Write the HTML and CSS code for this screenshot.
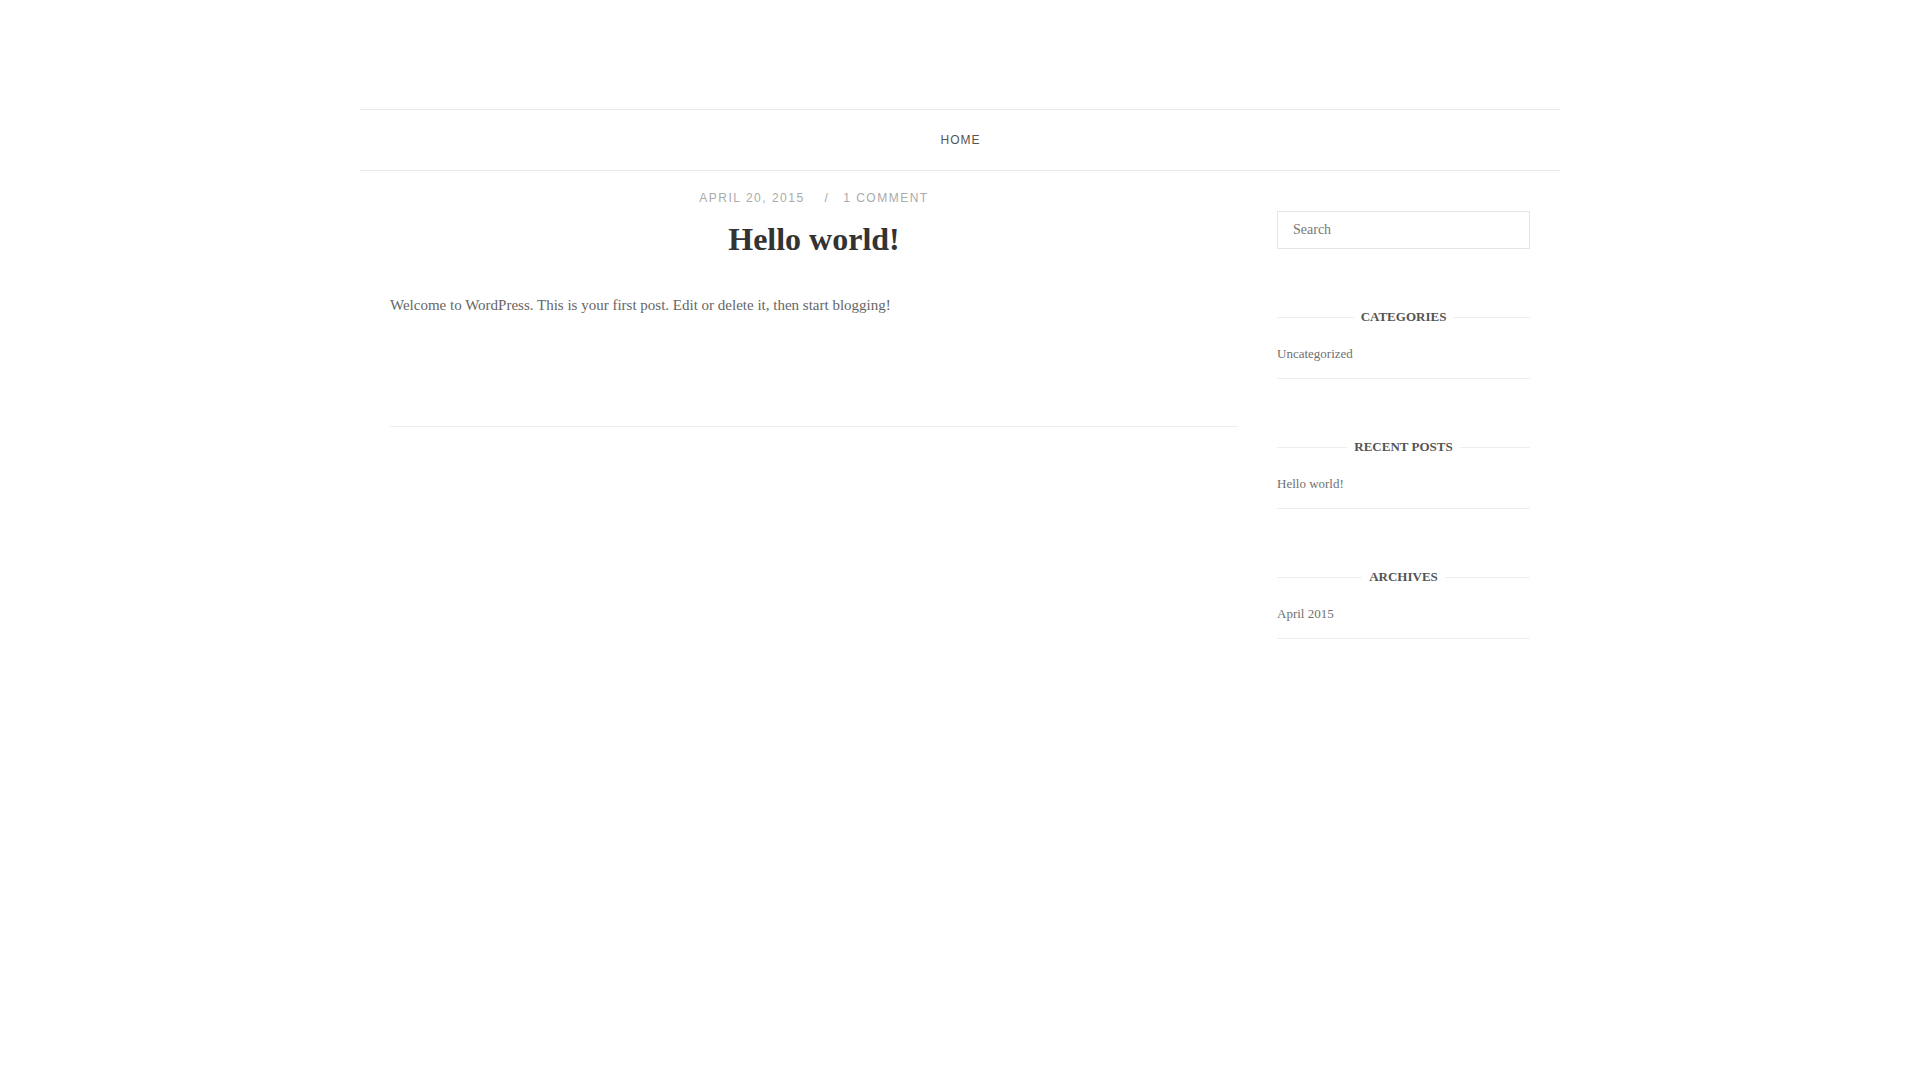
FILE: index.html
```html
<!DOCTYPE html>
<html lang="en">
<head>
<meta charset="utf-8">
<title>Hello world!</title>
<link rel="stylesheet" href="styles.css">
</head>
<body>
<div class="page">
  <header class="site-header"></header>
  <nav class="main-nav">
    <a class="nav-link" href="#">HOME</a>
  </nav>
  <div class="content-wrap">
    <main class="main">
      <article class="post">
        <div class="post-meta">
          <span class="meta-item">APRIL 20, 2015</span>
          <span class="meta-sep">/</span>
          <span class="meta-item">1 COMMENT</span>
        </div>
        <h1 class="post-title">Hello world!</h1>
        <div class="post-body">
          <p>Welcome to WordPress. This is your first post. Edit or delete it, then start blogging!</p>
        </div>
      </article>
    </main>
    <aside class="sidebar">
      <div class="search-widget">
        <input class="search-input" type="text" placeholder="Search">
      </div>
      <section class="widget">
        <h3 class="widget-title"><span>CATEGORIES</span></h3>
        <ul class="widget-list"><li><a href="#">Uncategorized</a></li></ul>
      </section>
      <section class="widget">
        <h3 class="widget-title"><span>RECENT POSTS</span></h3>
        <ul class="widget-list"><li><a href="#">Hello world!</a></li></ul>
      </section>
      <section class="widget">
        <h3 class="widget-title"><span>ARCHIVES</span></h3>
        <ul class="widget-list"><li><a href="#">April 2015</a></li></ul>
      </section>
    </aside>
  </div>
</div>
</body>
</html>
```

FILE: styles.css
```css
html, body {
  margin: 0;
  padding: 0;
  background: #fff;
}
body {
  font-family: "Liberation Serif", "Times New Roman", serif;
  color: #666;
}
.page {
  width: 1200px;
  margin: 0 auto;
}
.site-header {
  height: 109px;
}
.main-nav {
  border-top: 1px solid #e8e8e8;
  border-bottom: 1px solid #e8e8e8;
  height: 60px;
  display: flex;
  align-items: center;
  justify-content: center;
}
.nav-link {
  font-family: "Liberation Sans", Arial, sans-serif;
  font-size: 12px;
  letter-spacing: 1px;
  color: #555;
  text-decoration: none;
  line-height: 20px;
  margin-left: 1px;
}
.content-wrap {
  display: flex;
  padding: 0 30px;
  gap: 39px;
}
.main {
  flex: 1;
  padding-top: 17px;
}
.post {
  border-bottom: 1px solid #eee;
  padding-bottom: 108px;
}
.post-meta {
  text-align: center;
  font-family: "Liberation Sans", Arial, sans-serif;
  font-size: 12px;
  letter-spacing: 1.5px;
  line-height: 20px;
  color: #aaa;
}
.meta-sep {
  margin: 0 9px 0 15px;
}
.post-title {
  margin: 11px 0 0;
  text-align: center;
  font-size: 32px;
  line-height: 40px;
  font-weight: bold;
  color: #333;
}
.post-body {
  margin-top: 33px;
  font-size: 15px;
  line-height: 26px;
  color: #666;
}
.post-body p {
  margin: 0;
}
.sidebar {
  width: 253px;
  padding-top: 40px;
}
.search-widget {
  margin-bottom: 58px;
}
.search-input {
  box-sizing: border-box;
  width: 100%;
  height: 38px;
  border: 1px solid #e6e6e6;
  padding: 0 15px;
  font-family: "Liberation Serif", "Times New Roman", serif;
  font-size: 14px;
  color: #777;
  outline: none;
  background: #fff;
}
.search-input::placeholder {
  color: #777;
}
.widget {
  margin-bottom: 58px;
}
.widget-title {
  margin: 0 0 17px;
  display: flex;
  align-items: center;
  gap: 7px;
  font-size: 13px;
  line-height: 20px;
  font-weight: bold;
  color: #555;
}
.widget-title::before,
.widget-title::after {
  content: "";
  flex: 1;
  border-top: 1px solid #eee;
}
.widget-list {
  list-style: none;
  margin: 0;
  padding: 0;
}
.widget-list li {
  font-size: 13px;
  line-height: 20px;
  padding-bottom: 14px;
  border-bottom: 1px solid #eee;
}
.widget-list a {
  color: #707070;
  text-decoration: none;
}
```
